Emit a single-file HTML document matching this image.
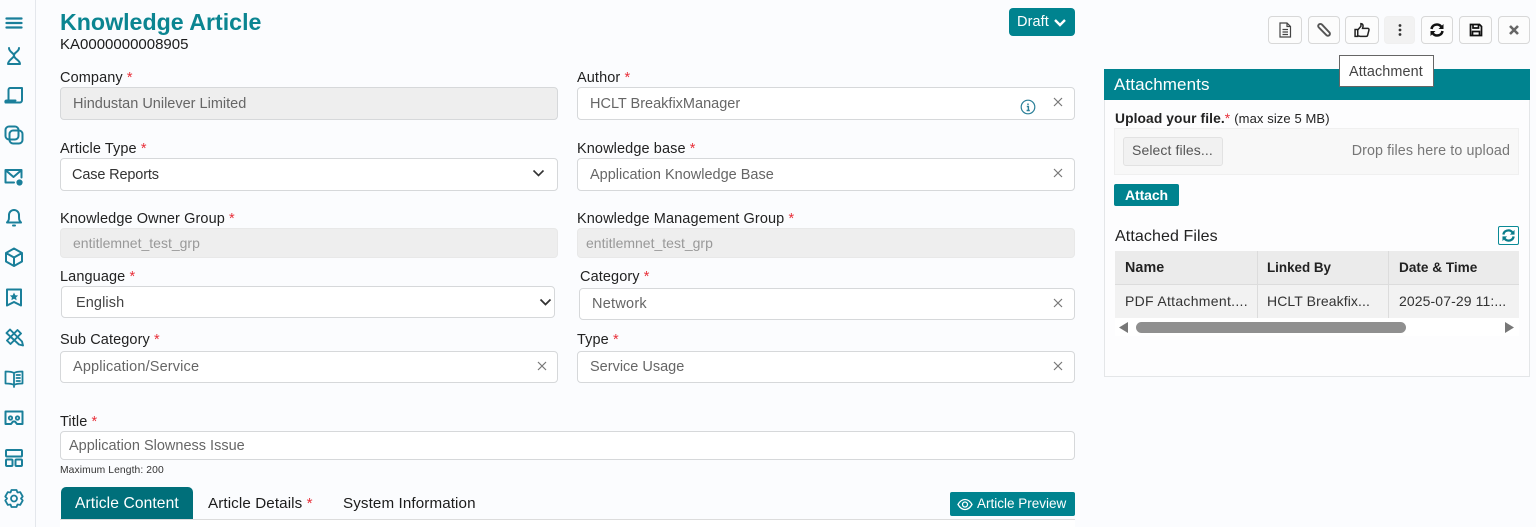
<!DOCTYPE html>
<html><head><meta charset="utf-8">
<style>
html,body{margin:0;padding:0}
body{width:1536px;height:527px;overflow:hidden;background:#fbfcfe;position:relative;font-family:"Liberation Sans",sans-serif;color:#1c1c1c}
.t{position:absolute;white-space:nowrap;line-height:18px;font-size:14.5px;letter-spacing:.1px}
.l{font-size:14.5px;color:#222}
.l i,.r{color:#e8303a;font-style:normal}
.f{position:absolute;box-sizing:border-box;background:#fff;border:1px solid #d6d8da;border-radius:4px}
.g{background:#eeeeee}
.v{color:#666;letter-spacing:0;margin-top:1px}
.x{position:absolute;width:10px;height:10px}
.b{position:absolute;box-sizing:border-box;top:16px;height:28px;border:1px solid #d8d8d8;border-radius:4px;background:#fcfcfc}
.b svg{position:absolute;left:50%;top:50%;transform:translate(-50%,-50%)}
.s{position:absolute;left:3.500px;width:20px;height:20px;fill:none;stroke:#1a7f9a;stroke-linejoin:round;stroke-linecap:round}
.c{position:absolute;box-sizing:border-box;border-right:1px solid #dcdcdc}
</style></head><body>

<div style="position:absolute;left:35px;top:0;width:1px;height:527px;background:#e4e7ec"></div>
<svg class="s" style="top:13px" viewBox="0 0 20 20"><path d="M2.500 5.500h15M2.500 10h15M2.500 14.500h15" stroke-width="2.300"/></svg>
<svg class="s" style="top:46px" viewBox="0 0 20 20"><path d="M5 2c0 4 5 5 5 7.500S4 14 4 18h12c0-4-6-5-6-8.500S15 6 15 2" stroke-width="2"/></svg>
<svg class="s" style="top:85px" viewBox="0 0 20 20"><path d="M6 3h12v12c0 1.500-1 2.500-2 2.500H1.500c-.5-1 0-2 1-2h9M6 3c-1 0-1.500 1-1.500 2v10" stroke-width="2"/></svg>
<svg class="s" style="top:125px" viewBox="0 0 20 20"><rect x="1.500" y="1.500" width="13" height="13" rx="3.500" stroke-width="2"/><rect x="5.500" y="5.500" width="13" height="13" rx="3.500" stroke-width="2"/></svg>
<svg class="s" style="top:167px" viewBox="0 0 20 20"><path d="M10 15.500H1.500V3h16v7.500M2 3.500l7.500 6.500 7.500-6.500" stroke-width="2"/><circle cx="15.500" cy="15.500" r="2.300" fill="#1a7f9a" stroke-width="1.600"/></svg>
<svg class="s" style="top:207px" viewBox="0 0 20 20"><path d="M3 15.500c2-2 2-3 2-7.500a5 5 0 0 1 10 0c0 4.500 0 5.500 2 7.500zM9 18.500h2" stroke-width="2"/></svg>
<svg class="s" style="top:247px" viewBox="0 0 20 20"><path d="M10 1.500l8 4.500v8.500l-8 4.500-8-4.500V6zM2 6l8 4.500L18 6M10 10.500V19" stroke-width="2"/></svg>
<svg class="s" style="top:287px" viewBox="0 0 20 20"><path d="M3 2.500h14v16L10 15l-7 3.500z" stroke-width="2"/><path d="M10 5.500l1.300 2.700 2.800.3-2 1.900.5 2.800-2.600-1.400-2.600 1.400.5-2.800-2-1.900 2.800-.3z" fill="#1a7f9a" stroke="none"/></svg>
<svg class="s" style="top:327px" viewBox="0 0 20 20"><path d="M3 13.500L13.500 3l3.500 3.500L6.500 17zM2.500 6L6 2.500l12 12 1 4-4-1z" stroke-width="1.900"/></svg>
<svg class="s" style="top:368px" viewBox="0 0 20 20"><path d="M10 5c-2-1.500-5-1.500-8.500-1.500v12c3.500 0 6.500 0 8.500 1.500 2-1.500 5-1.500 8.500-1.500v-12C15 3.500 12 3.500 10 5zM10 5v14M12.500 7h3.500M12.500 10h3.500M12.500 13h3.500" stroke-width="1.800"/></svg>
<svg class="s" style="top:408px" viewBox="0 0 20 20"><path d="M1.500 3.500h17v12.500H13l-2-2.500H9L7 16H1.500z" stroke-width="2"/><circle cx="6.500" cy="10" r="1.700" stroke-width="1.800"/><circle cx="13.500" cy="10" r="1.700" stroke-width="1.800"/></svg>
<svg class="s" style="top:448px" viewBox="0 0 20 20"><rect x="2" y="2" width="16" height="6.500" rx="1" stroke-width="2"/><rect x="2" y="11.500" width="6.500" height="6.500" rx="1" stroke-width="2"/><rect x="11.500" y="11.500" width="6.500" height="6.500" rx="1" stroke-width="2"/></svg>
<svg class="s" style="top:488px" viewBox="0 0 20 20"><path d="M7.500 2h5l1 2.500 2.700-.4 2.500 4.400L17 10.500l1.700 2-2.500 4.400-2.700-.4-1 2.500h-5l-1-2.500-2.700.4-2.500-4.400 1.700-2-1.700-2 2.500-4.400 2.700.4z" stroke-width="1.800"/><circle cx="10" cy="10.500" r="3" stroke-width="1.800"/></svg>

<div class="t" style="left:60px;top:8px;font-size:23.200px;line-height:29px;font-weight:bold;color:#0b8591;letter-spacing:0">Knowledge Article</div>
<div class="t" style="left:60px;top:36px;font-size:15px;color:#1c1c1c;letter-spacing:0">KA0000000008905</div>
<div style="position:absolute;left:1009px;top:8px;width:66px;height:28px;background:#00838f;border-radius:4px"></div>
<div class="t" style="left:1017px;top:13px;color:#fff;font-size:14.500px">Draft</div>
<svg style="position:absolute;left:1053px;top:18px" width="14" height="10" viewBox="0 0 14 10"><path d="M2 2l5 5 5-5" fill="none" stroke="#fff" stroke-width="2.400"/></svg>

<div class="t l" style="left:60px;top:69px">Company <i>*</i></div>
<div class="f g" style="left:60px;top:87px;width:498px;height:33px"></div>
<div class="t v" style="left:73px;top:94px">Hindustan Unilever Limited</div>

<div class="t l" style="left:577px;top:69px">Author <i>*</i></div>
<div class="f" style="left:577px;top:87px;width:498px;height:33px"></div>
<div class="t v" style="left:590px;top:94px">HCLT BreakfixManager</div>
<svg style="position:absolute;left:1020px;top:99px" width="16" height="16" viewBox="0 0 16 16"><circle cx="8" cy="8" r="6.800" fill="none" stroke="#2a7f98" stroke-width="1.200"/><path d="M8 4.500v1.500M6.800 7.500H8.400V11.300M6.600 11.500h3.200" fill="none" stroke="#2a7f98" stroke-width="1.400"/></svg>
<svg class="x" style="left:1053px;top:97px" viewBox="0 0 10 10"><path d="M1 1l8 8M9 1l-8 8" stroke="#777" stroke-width="1.200"/></svg>

<div class="t l" style="left:60px;top:140px">Article Type <i>*</i></div>
<div class="f" style="left:60px;top:158px;width:498px;height:33px"></div>
<div class="t" style="left:72px;top:166px;color:#333;letter-spacing:-.15px">Case Reports</div>
<svg style="position:absolute;left:532px;top:169px" width="13" height="9" viewBox="0 0 13 9"><path d="M1.500 1.500l5 5 5-5" fill="none" stroke="#333" stroke-width="1.600"/></svg>

<div class="t l" style="left:577px;top:140px">Knowledge base <i>*</i></div>
<div class="f" style="left:577px;top:158px;width:498px;height:33px"></div>
<div class="t v" style="left:590px;top:165px">Application Knowledge Base</div>
<svg class="x" style="left:1053px;top:168px" viewBox="0 0 10 10"><path d="M1 1l8 8M9 1l-8 8" stroke="#777" stroke-width="1.200"/></svg>

<div class="t l" style="left:60px;top:210px">Knowledge Owner Group <i>*</i></div>
<div class="f g" style="left:60px;top:228px;width:498px;height:30px;border-color:#e8e8e8"></div>
<div class="t" style="left:73px;top:234px;color:#999;font-size:14px;letter-spacing:0">entitlemnet_test_grp</div>

<div class="t l" style="left:577px;top:210px">Knowledge Management Group <i>*</i></div>
<div class="f g" style="left:577px;top:228px;width:498px;height:30px;border-color:#e8e8e8"></div>
<div class="t" style="left:586px;top:234px;color:#999;font-size:14px;letter-spacing:0">entitlemnet_test_grp</div>

<div class="t l" style="left:60px;top:268px">Language <i>*</i></div>
<div class="f" style="left:61px;top:286px;width:494px;height:32px"></div>
<div class="t" style="left:76px;top:294px;color:#444">English</div>
<svg style="position:absolute;left:539px;top:298px" width="13" height="9" viewBox="0 0 13 9"><path d="M1.500 1.500l5 5 5-5" fill="none" stroke="#333" stroke-width="1.800"/></svg>

<div class="t l" style="left:580px;top:268px">Category <i>*</i></div>
<div class="f" style="left:579px;top:288px;width:496px;height:32px"></div>
<div class="t v" style="left:592px;top:294px;letter-spacing:.25px">Network</div>
<svg class="x" style="left:1053px;top:298px" viewBox="0 0 10 10"><path d="M1 1l8 8M9 1l-8 8" stroke="#777" stroke-width="1.200"/></svg>

<div class="t l" style="left:60px;top:331px">Sub Category <i>*</i></div>
<div class="f" style="left:60px;top:351px;width:498px;height:32px"></div>
<div class="t v" style="left:73px;top:357px;letter-spacing:.15px">Application/Service</div>
<svg class="x" style="left:537px;top:361px" viewBox="0 0 10 10"><path d="M1 1l8 8M9 1l-8 8" stroke="#777" stroke-width="1.200"/></svg>

<div class="t l" style="left:577px;top:331px">Type <i>*</i></div>
<div class="f" style="left:577px;top:351px;width:498px;height:32px"></div>
<div class="t v" style="left:590px;top:357px">Service Usage</div>
<svg class="x" style="left:1053px;top:361px" viewBox="0 0 10 10"><path d="M1 1l8 8M9 1l-8 8" stroke="#777" stroke-width="1.200"/></svg>

<div class="t l" style="left:60px;top:413px">Title <i>*</i></div>
<div class="f" style="left:60px;top:431px;width:1015px;height:29px"></div>
<div class="t v" style="left:69px;top:436px">Application Slowness Issue</div>
<div class="t" style="left:60px;top:463px;font-size:10.300px;line-height:16px;color:#333;letter-spacing:.1px">Maximum Length: 200</div>

<div style="position:absolute;left:61px;top:487px;width:132px;height:32px;background:#006f7a;border-radius:5px 5px 0 0"></div>
<div class="t" style="left:75px;top:495px;color:#fff;font-size:15.600px">Article Content</div>
<div class="t" style="left:208px;top:495px;font-size:15.200px">Article Details <span class="r">*</span></div>
<div class="t" style="left:343px;top:495px;font-size:15.200px">System Information</div>
<div style="position:absolute;left:950px;top:492px;width:125px;height:24px;background:#00838f;border-radius:2px"></div>
<svg style="position:absolute;left:957px;top:498px" width="16" height="13" viewBox="0 0 16 13"><path d="M1 6.500C3 3 5.500 1.500 8 1.500S13 3 15 6.500C13 10 10.500 11.500 8 11.500S3 10 1 6.500z" fill="none" stroke="#fff" stroke-width="1.300"/><circle cx="8" cy="6.500" r="2.500" fill="none" stroke="#fff" stroke-width="1.300"/></svg>
<div class="t" style="left:977px;top:495px;color:#fff;font-size:13.500px;letter-spacing:0">Article Preview</div>
<div style="position:absolute;left:60px;top:519px;width:1015px;height:8px;background:#fff;border-top:1px solid #dcdcdc;box-sizing:border-box"></div>

<div class="b" style="left:1268px;width:34px"><svg width="14" height="16" viewBox="0 0 14 16"><path d="M2 1h7l3.500 3.500V15H2zM9 1v3.500h3.500M4.500 7.500h5.500M4.500 10h5.500M4.500 12.500h5.500" fill="none" stroke="#444" stroke-width="1.200"/></svg></div>
<div class="b" style="left:1308px;width:32px"><svg width="16" height="16" viewBox="0 0 15 15"><path d="M2.500 2.500a2.200 2.200 0 0 1 3.200 0l6.800 7.200a1.900 1.900 0 0 1-2.700 2.700L3 5.500a2.100 2.100 0 0 1-.5-3z" fill="none" stroke="#555" stroke-width="1.800"/></svg></div>
<div class="b" style="left:1345px;width:34px"><svg width="16" height="16" viewBox="0 0 15 15"><path d="M1 7h2.500v6.500H1zM3.500 7.500l3-3.500V1.500c1.500 0 2 1 2 2.500l-.5 2h5c1 0 1.200 1 1 1.700l-1.300 5c-.2.600-.6.800-1.200.8H6c-1 0-1.500-.5-2.500-.8" fill="none" stroke="#222" stroke-width="1.400"/></svg></div>
<div class="b" style="left:1384px;width:31px;background:#f2f2f2;border-color:#f0f0f0"><svg width="4" height="13" viewBox="0 0 4 13"><circle cx="2" cy="2" r="1.400" fill="#333"/><circle cx="2" cy="6.500" r="1.400" fill="#333"/><circle cx="2" cy="11" r="1.400" fill="#333"/></svg></div>
<div class="b" style="left:1421px;width:32px"><svg width="14" height="14" viewBox="0 0 14 14"><path d="M1.500 6C2 3 4.300 1.500 7 1.500c2 0 3.500 1 4.500 2.500M12.500 8c-.5 3-2.800 4.500-5.500 4.500-2 0-3.500-1-4.500-2.500" fill="none" stroke="#111" stroke-width="2.500"/><path d="M13.500 1v5h-5zM.5 13V8h5z" fill="#111"/></svg></div>
<div class="b" style="left:1459px;width:33px"><svg width="14" height="14" viewBox="0 0 14 14"><path d="M1.500 1.500h9l2 2v9h-11zM4 1.500v3.500h5.500V1.500M3.500 12.500V8.500h7v4" fill="none" stroke="#111" stroke-width="1.700"/></svg></div>
<div class="b" style="left:1498px;width:32px"><svg width="11" height="11" viewBox="0 0 11 11"><path d="M1.500 1.500l8 8M9.500 1.500l-8 8" stroke="#666" stroke-width="2.600"/></svg></div>

<div style="position:absolute;box-sizing:border-box;left:1104px;top:70px;width:426px;height:307px;border:1px solid #e4e6e8;background:#fdfdfe"></div>
<div style="position:absolute;left:1104px;top:69px;width:426px;height:31px;background:#00838f"></div>
<div class="t" style="left:1114px;top:76px;color:#fff;font-size:17px;letter-spacing:.1px">Attachments</div>
<div style="position:absolute;box-sizing:border-box;left:1339px;top:55px;width:95px;height:32px;background:#fff;border:1px solid #666"></div>
<div class="t" style="left:1349px;top:63px;color:#444;font-size:14.400px;letter-spacing:.1px">Attachment</div>

<div class="t" style="left:1115px;top:110px;font-size:13.800px;font-weight:bold;color:#222">Upload your file.<span class="r" style="font-weight:normal">*</span> <span style="font-weight:normal;font-size:13px;margin-left:0">(max size 5 MB)</span></div>
<div style="position:absolute;box-sizing:border-box;left:1114px;top:128px;width:405px;height:47px;background:#f8f8f8;border:1px solid #f0f0f0"></div>
<div style="position:absolute;box-sizing:border-box;left:1123px;top:137px;width:100px;height:29px;background:#f1f1f1;border:1px solid #e2e2e2;border-radius:3px"></div>
<div class="t" style="left:1132px;top:141px;color:#555;font-size:14px">Select files...</div>
<div class="t" style="right:26px;top:142px;color:#777;font-size:14.300px">Drop files here to upload</div>
<div style="position:absolute;left:1114px;top:184px;width:65px;height:22px;background:#00838f;border-radius:2px"></div>
<div class="t" style="left:1125px;top:186px;color:#fff;font-size:14px;font-weight:bold;letter-spacing:-.1px">Attach</div>
<div class="t" style="left:1115px;top:228px;font-size:16px;color:#222">Attached Files</div>
<div style="position:absolute;box-sizing:border-box;left:1498px;top:226px;width:21px;height:19px;border:1px solid #0a8a96;border-radius:2px;background:#fff"></div>
<svg style="position:absolute;left:1502px;top:229px" width="13" height="13" viewBox="0 0 14 14"><path d="M1.500 6C2 3 4.300 1.500 7 1.500c2 0 3.500 1 4.500 2.500M12.500 8c-.5 3-2.800 4.500-5.500 4.500-2 0-3.500-1-4.500-2.500" fill="none" stroke="#0a7d8a" stroke-width="2.500"/><path d="M13.500 1v5h-5zM.5 13V8h5z" fill="#0a7d8a"/></svg>

<div style="position:absolute;left:1115px;top:251px;width:404px;height:34px;background:#ebebeb;border-bottom:1px solid #dcdcdc;box-sizing:border-box"></div>
<div style="position:absolute;left:1115px;top:285px;width:404px;height:33px;background:#f2f2f2"></div>
<div class="c" style="left:1115px;top:251px;width:143px;height:67px"></div>
<div class="c" style="left:1258px;top:251px;width:131px;height:67px"></div>
<div class="t" style="left:1125px;top:259px;font-size:14.300px;font-weight:bold;color:#222">Name</div>
<div class="t" style="left:1267px;top:259px;font-size:13.400px;font-weight:bold;color:#222;letter-spacing:0">Linked By</div>
<div class="t" style="left:1399px;top:259px;font-size:13.600px;font-weight:bold;color:#222;letter-spacing:0">Date &amp; Time</div>
<div class="t" style="left:1125px;top:292px;font-size:14px;color:#333;letter-spacing:.3px">PDF Attachment....</div>
<div class="t" style="left:1267px;top:292px;font-size:14px;color:#333">HCLT Breakfix...</div>
<div class="t" style="left:1399px;top:292px;font-size:14px;color:#333">2025-07-29 11:...</div>
<div style="position:absolute;left:1115px;top:318px;width:404px;height:18px;background:#fff"></div>
<div style="position:absolute;left:1136px;top:322px;width:270px;height:11px;background:#8f8f8f;border-radius:6px"></div>
<svg style="position:absolute;left:1118px;top:321px" width="11" height="13" viewBox="0 0 11 13"><path d="M10 1v11L1 6.500z" fill="#777"/></svg>
<svg style="position:absolute;left:1504px;top:321px" width="11" height="13" viewBox="0 0 11 13"><path d="M1 1v11l9-5.500z" fill="#777"/></svg>

</body></html>
